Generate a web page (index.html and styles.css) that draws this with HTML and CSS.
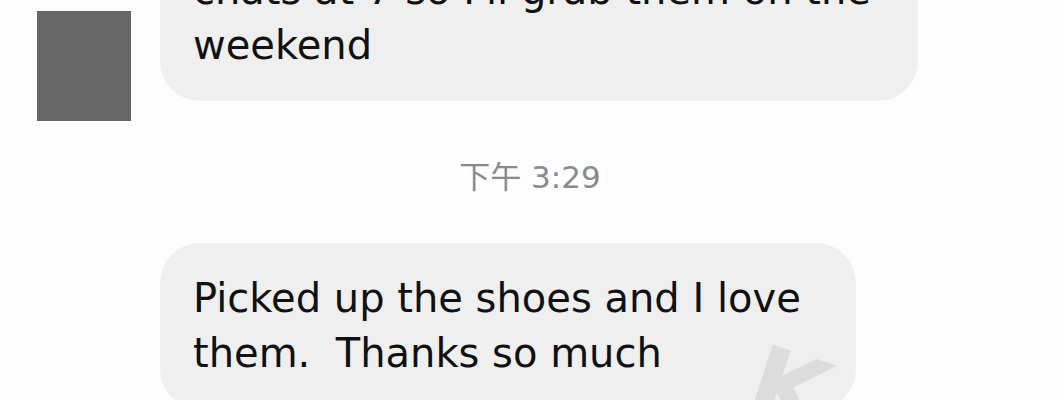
FILE: index.html
```html
<!DOCTYPE html>
<html lang="en">
<head>
  <meta charset="UTF-8" />
  <meta name="viewport" content="width=device-width, initial-scale=1" />
  <title>Messages</title>
  <link rel="stylesheet" href="styles.css">
</head>
<body>

  <div class="thread">
    <!-- Incoming message -->
    <div class="row">
      <div class="avatar"></div>
      <div class="bubble">chats at 7 so I'll grab them on the<br>weekend</div>
    </div>

    <div class="stamp">下午 3:29</div>

    <div class="row">
      <div class="avatar-space"></div>
      <div class="bubble wide">
        Picked up the shoes and I love<br>them.&nbsp; Thanks so much
        <span class="mark">K</span>
      </div>
    </div>
  </div>

</body>
</html>
```

FILE: styles.css
```css
/* Reset & base */
* {
  box-sizing: border-box;
}
body {
  margin: 0;
  height: 400px;
  overflow: hidden;
  background: #fdfdfd;
  font-family: 'DejaVu Sans', 'Noto Sans CJK SC', sans-serif;
  color: #111;
}

.thread {
  margin-top: -65px;
  display: flex;
  flex-direction: column;
}

.row {
  display: flex;
  align-items: flex-end;
  gap: 29px;
  padding-left: 37px;
}

.avatar {
  width: 94px;
  height: 110px;
  background: #676767;
  margin-bottom: -20px;
  flex-shrink: 0;
}
.avatar-space {
  width: 94px;
  flex-shrink: 0;
}

.bubble {
  position: relative;
  overflow: hidden;
  background: #efefef;
  border-radius: 40px;
  padding: 28px 47px 28px 33px;
  font-size: 40px;
  line-height: 55px;
  white-space: nowrap;
}
.bubble.wide {
  padding-right: 55px;
}

.stamp {
  margin: 58px 0 48px;
  text-align: center;
  font-size: 31px;
  line-height: 36px;
  color: #8a8a8a;
}

/* faint watermark over the last bubble */
.mark {
  position: absolute;
  left: 590px;
  top: 98px;
  font-size: 100px;
  font-weight: bold;
  line-height: 1;
  color: #dcdcdc;
  transform: rotate(18deg);
  pointer-events: none;
}
```
